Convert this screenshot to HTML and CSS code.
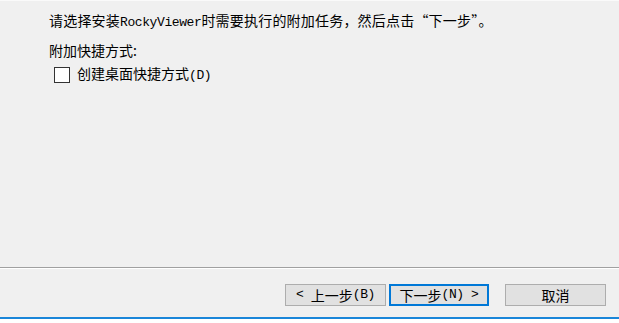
FILE: index.html
```html
<!DOCTYPE html>
<html lang="zh-CN">
<head>
<meta charset="utf-8">
<title>安装 - RockyViewer</title>
<link rel="stylesheet" href="styles.css">
</head>
<body>
<div class="window">
  <main class="page">
    <p class="intro">请选择安装<span class="mono">RockyViewer</span>时需要执行的附加任务，然后点击“下一步”。</p>
    <p class="group">附加快捷方式:</p>
    <label class="check">
      <input type="checkbox" class="box">
      <span>创建桌面快捷方式<span class="mono">(D)</span></span>
    </label>
  </main>
  <div class="bevel"></div>
  <footer class="buttons">
    <button class="btn"><span class="mono">&lt; </span>上一步<span class="mono">(B)</span></button>
    <button class="btn default">下一步<span class="mono">(N) &gt;</span></button>
    <button class="btn cancel">取消</button>
  </footer>
  <div class="frame"></div>
</div>
</body>
</html>
```

FILE: styles.css
```css
* { box-sizing: border-box; }
html, body { margin: 0; padding: 0; }
body {
  background: #ffffff;
  font-family: "Noto Sans CJK SC", "Noto Sans", sans-serif;
  font-size: 14px;
  color: #000;
}
.window {
  width: 619px;
  height: 323px;
  display: flex;
  flex-direction: column;
  background: #f0f0f0;
  border-top: 1px solid #fafafa;
}
.mono {
  font-family: "Liberation Mono", "DejaVu Sans Mono", monospace;
  font-size: 13px;
  letter-spacing: -0.4px;
}
.page {
  flex: 1;
  padding: 11px 0 0 49px;
  display: flex;
  flex-direction: column;
}
.page p { margin: 0; line-height: 16px; }
.intro { letter-spacing: 0.2px; }
.group { margin-top: 11px !important; }
.check {
  margin-top: 7px;
  margin-left: 5px;
  display: flex;
  align-items: center;
  gap: 7px;
  line-height: 16px;
}
.box {
  appearance: none;
  -webkit-appearance: none;
  margin: 0;
  width: 16px;
  height: 16px;
  border: 1px solid #333;
  background: #fff;
}
.bevel {
  height: 2px;
  border-top: 1px solid #a0a0a0;
  border-bottom: 1px solid #ffffff;
}
.buttons {
  display: flex;
  justify-content: flex-end;
  align-items: flex-start;
  gap: 3px;
  padding: 15px 13px 0 0;
  height: 48px;
}
.btn {
  width: 101px;
  height: 22px;
  border: 1px solid #adadad;
  background: #e1e1e1;
  font-family: "Noto Sans CJK SC", "Noto Sans", sans-serif;
  font-size: 14px;
  line-height: 18px;
  color: #000;
  padding: 0;
  display: flex;
  align-items: center;
  justify-content: center;
  white-space: pre;
}
.btn.default {
  width: 100px;
  border: 2px solid #0078d7;
}
.btn.cancel { margin-left: 13px; }
.frame {
  height: 6px;
  border-top: 2px solid #1a86d9;
  background: #ffffff;
}
```
